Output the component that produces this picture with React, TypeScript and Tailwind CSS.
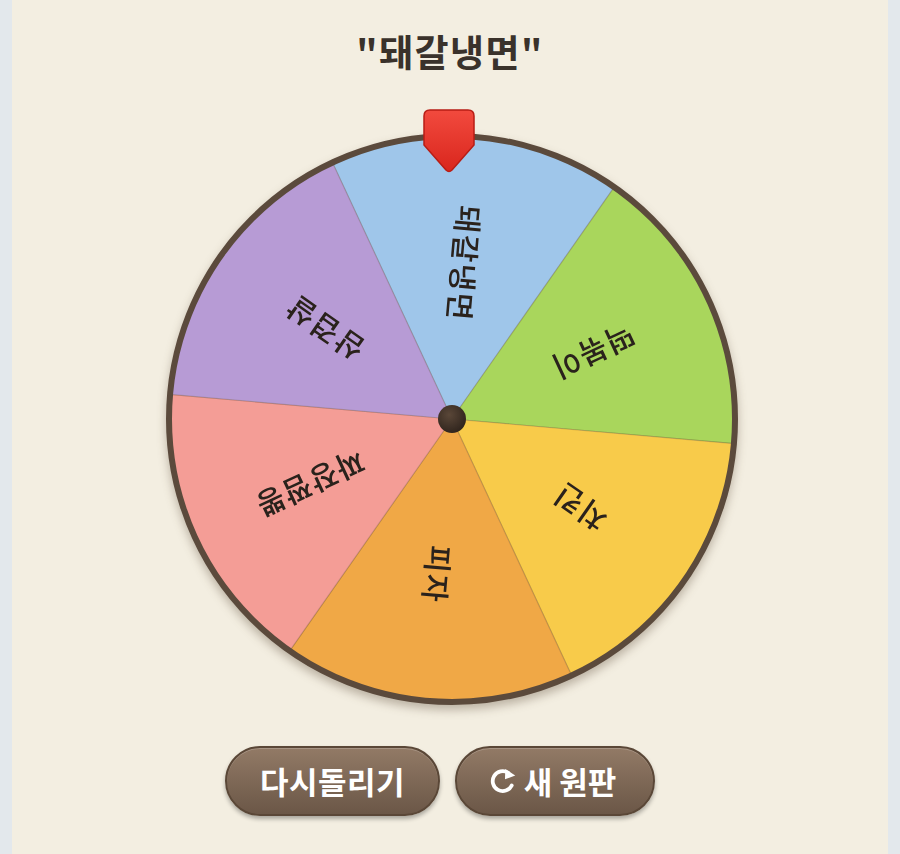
import React from "react";

const CX = 300;
const CY = 300;
const R = 283;

const slices = [
  { label: "돼갈냉면", color: "#9fc6ea", mid: 5, rot: 95 },
  { label: "떡볶이", color: "#a9d65c", mid: 65, rot: 155 },
  { label: "치킨", color: "#f8cb4a", mid: 125, rot: 215 },
  { label: "피자", color: "#f0a846", mid: 185, rot: 95 },
  { label: "짜장짬뽕", color: "#f49d96", mid: 245, rot: 155 },
  { label: "삼겹살", color: "#b79bd5", mid: 305, rot: 215 },
];

const pt = (deg: number, r: number) => {
  const a = (deg * Math.PI) / 180;
  return [CX + r * Math.sin(a), CY - r * Math.cos(a)];
};

function Wheel() {
  return (
    <svg
      width={600}
      height={600}
      viewBox="0 0 600 600"
      className="font-['Noto_Sans_CJK_KR',sans-serif] drop-shadow-[0_5px_5px_rgba(60,40,20,0.3)]"
    >
      {slices.map((s) => {
        const [x1, y1] = pt(s.mid - 30, R);
        const [x2, y2] = pt(s.mid + 30, R);
        return (
          <path
            key={s.label}
            d={`M${CX} ${CY} L${x1} ${y1} A${R} ${R} 0 0 1 ${x2} ${y2} Z`}
            fill={s.color}
            stroke="rgba(80,50,30,0.18)"
            strokeWidth={1.2}
          />
        );
      })}
      {slices.map((s) => {
        const [x, y] = pt(s.mid, 156);
        return (
          <text
            key={s.label + "t"}
            transform={`translate(${x} ${y}) rotate(${s.rot})`}
            textAnchor="middle"
            dominantBaseline="central"
            fontSize={30}
            fontWeight={500}
            fill="#2a221c"
            letterSpacing={1.5}
          >
            {s.label}
          </text>
        );
      })}
      <circle cx={CX} cy={CY} r={R} fill="none" stroke="#5b4a3c" strokeWidth={6} />
      <defs>
        <radialGradient id="hub" cx="40%" cy="35%" r="70%">
          <stop offset="0%" stopColor="#5a4738" />
          <stop offset="100%" stopColor="#2e231c" />
        </radialGradient>
      </defs>
      <circle cx={CX} cy={CY} r={14} fill="url(#hub)" />
    </svg>
  );
}

function Pointer() {
  return (
    <svg width={56} height={66} viewBox="0 0 56 66" className="absolute left-[269px] top-[-11px]">
      <defs>
        <linearGradient id="pin" x1="0" y1="0" x2="0" y2="1">
          <stop offset="0%" stopColor="#f24a3e" />
          <stop offset="100%" stopColor="#d9261d" />
        </linearGradient>
      </defs>
      <path
        d="M9 2 H47 Q53 2 53 8 V37 L31 62 Q28 65 25 62 L3 37 V8 Q3 2 9 2 Z"
        fill="url(#pin)"
        stroke="#b81d15"
        strokeWidth={1.5}
      />
    </svg>
  );
}

function RefreshIcon() {
  return (
    <svg width={30} height={30} viewBox="0 0 24 24" fill="none">
      <path d="M19 15.5 A8 8 0 1 1 16.2 5.4" stroke="white" strokeWidth={3} strokeLinecap="round" />
      <polygon points="13.8,2.4 21.8,7.6 13.6,10.6" fill="white" />
    </svg>
  );
}

export default function App() {
  return (
    <div className="w-full h-[854px] bg-[#e3e8ec] px-[12px] font-['Noto_Sans_CJK_KR','Noto_Sans',sans-serif]">
      <div className="h-full bg-[#f3eee1] flex flex-col items-center">
        <h1 className="pt-[27px] text-[37px] leading-[48px] font-bold text-[#3a322b] tracking-[1.5px]">
          "돼갈냉면"
        </h1>
        <div className="relative mt-[44px] ml-[4px]">
          <Wheel />
          <Pointer />
        </div>
        <div className="mt-[27px] mr-[20px] flex gap-[15px]">
          <button className="w-[215px] h-[70px] rounded-full bg-gradient-to-b from-[#927a66] to-[#6b5747] border-2 border-[#5a4737] shadow-[0_3px_4px_rgba(0,0,0,0.3),inset_0_1px_0_rgba(255,255,255,0.2)] text-white text-[31px] font-bold tracking-[0.5px] flex items-center justify-center">
            다시돌리기
          </button>
          <button className="w-[200px] h-[70px] rounded-full bg-gradient-to-b from-[#927a66] to-[#6b5747] border-2 border-[#5a4737] shadow-[0_3px_4px_rgba(0,0,0,0.3),inset_0_1px_0_rgba(255,255,255,0.2)] text-white text-[31px] font-bold flex items-center justify-center gap-[6px] pr-[6px]">
            <RefreshIcon />
            <span>새 원판</span>
          </button>
        </div>
      </div>
    </div>
  );
}
